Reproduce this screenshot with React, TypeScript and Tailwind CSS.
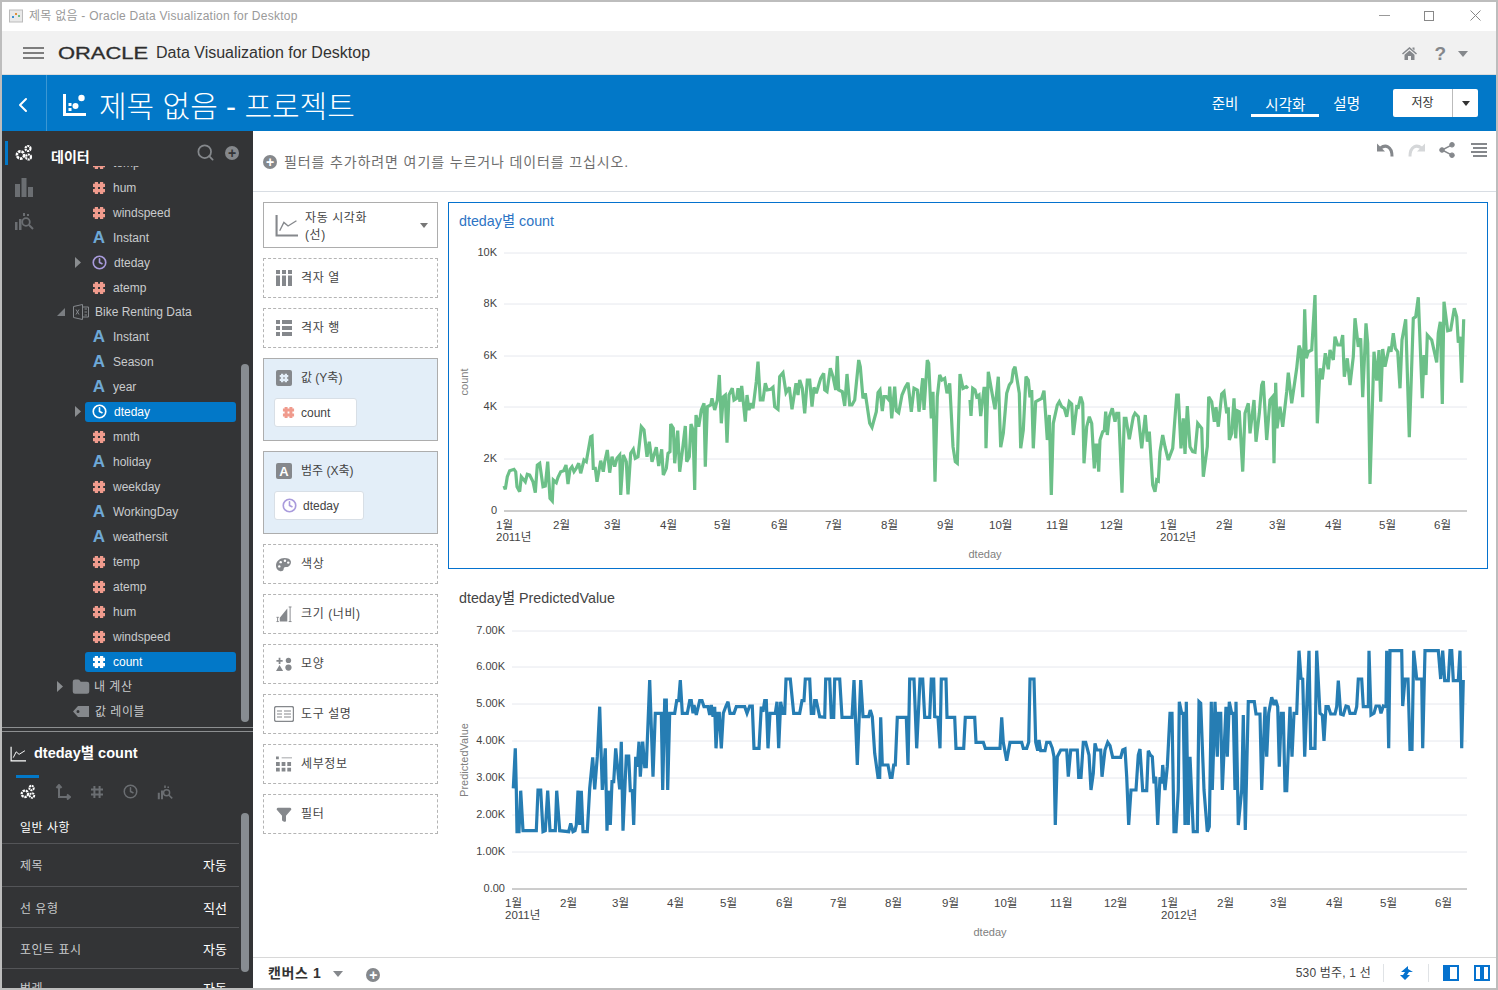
import React from 'react';
import { ChevronLeft, Search, Clock, Folder, Funnel } from 'lucide-react';

// chart traces, read off the picture at 3x: [x, y] pairs per half
const greenA = '168,858 172,868 178,830 185,812 198,808 203,815 207,860 215,875 220,830 232,845 238,823 245,825 255,845 262,878 268,795 275,790 285,860 292,858 299,785 306,895 313,903 316,840 325,848 330,832 338,815 347,812 354,795 360,852 366,808 372,800 378,815 385,805 392,790 398,820 408,780 415,785 428,710 432,708 436,805 442,805 447,845 458,782 466,815 470,785 478,750 485,818 492,770 500,800 507,775 515,765 518,885 526,765 535,785 540,883 548,760 556,748 562,775 570,770 580,680 588,690 597,770 604,725 612,785 625,742 632,798 641,748 646,825 655,805 660,760 666,755 668,672 676,685 680,790 689,692 695,815 704,745 712,678 716,785 724,770 729,672 735,690 740,870 744,645 752,680 760,630 768,610 772,800 778,620 788,615 792,595 800,630 808,600 814,525 820,670 826,590 832,585 837,728 843,585 853,565 858,600 866,595 870,565 876,605 881,558 892,665 897,585 903,630 910,610 915,625 925,545 930,485 937,600 945,600 952,550 958,570 968,568 975,562 980,620 990,628 995,530 1005,518 1014,578 1024,562 1032,628 1044,550 1050,585 1055,540 1063,565 1070,640 1078,540 1085,540 1092,620 1098,562 1105,580 1118,535 1127,520 1130,570 1137,575 1147,505 1155,530 1163,570 1168,468 1172,570 1183,575 1190,618 1197,522 1205,615 1212,615 1220,600 1232,480 1237,500 1245,595 1252,580 1265,670 1272,682 1285,635 1290,578 1296,570 1303,633 1308,590 1315,590 1323,600 1325,560 1331,655 1340,560 1345,632 1352,638 1362,585 1372,562 1380,548 1390,635 1398,565 1408,570 1413,635 1424,535 1428,630 1438,480 1442,490 1450,655 1455,575 1461,845 1468,590 1475,525 1482,540 1490,535 1497,580 1505,550 1515,740 1522,785 1528,790 1536,522 1545,565 1555,560 1560,565';
const greenB = '0,600 3,648 8,565 15,570 20,590 27,585 32,648 42,565 46,565 48,745 55,515 68,590 75,628 85,530 92,742 100,700 110,580 118,555 125,545 130,510 135,500 148,580 152,745 160,690 168,530 175,540 180,592 185,570 190,745 197,605 215,595 222,572 232,720 238,645 244,885 250,670 262,615 268,605 275,620 283,625 290,650 298,605 305,612 310,705 320,620 325,622 332,590 338,610 342,790 350,680 358,650 365,670 373,805 378,735 381,735 386,815 390,720 398,695 403,692 407,635 412,705 418,650 427,625 435,665 440,640 446,640 456,878 463,655 468,655 478,718 490,650 495,640 505,650 515,745 520,700 526,645 532,725 538,695 548,855 555,875 560,840 565,843 570,755 578,705 585,740 595,780 608,745 620,585 625,585 633,745 640,655 645,762 652,618 660,740 668,755 675,757 683,670 695,685 700,830 712,740 716,590 725,605 733,665 738,622 745,680 755,582 762,575 770,640 775,622 778,720 785,700 792,595 797,715 802,632 808,635 818,815 825,640 835,610 840,700 852,600 858,725 868,640 875,555 880,543 890,720 900,600 908,590 912,790 917,548 921,685 930,620 938,680 950,575 955,518 965,610 980,505 987,437 992,450 998,592 1004,328 1009,475 1015,455 1025,450 1035,285 1042,670 1050,505 1057,538 1066,460 1075,508 1080,450 1090,480 1095,410 1103,435 1112,435 1118,405 1123,530 1132,475 1140,555 1150,470 1155,355 1165,440 1172,415 1178,592 1188,370 1193,430 1200,852 1212,455 1220,542 1227,450 1232,605 1238,447 1245,500 1258,440 1263,455 1270,400 1276,445 1283,455 1290,565 1296,420 1307,358 1318,712 1330,355 1337,350 1345,292 1357,595 1362,465 1368,525 1372,405 1385,420 1400,487 1405,400 1411,365 1417,612 1422,305 1433,392 1442,390 1453,325 1460,350 1465,428 1470,410 1475,548 1481,358';
const blueA = '196,625 202,505 205,628 207,755 213,755 218,632 225,752 240,752 265,752 270,630 278,630 285,755 292,752 299,632 306,752 322,752 326,632 335,752 362,755 368,730 375,755 381,752 385,735 390,632 395,735 400,632 405,755 418,755 425,625 434,532 440,628 448,530 455,380 463,630 472,505 477,752 481,632 487,735 492,605 497,605 503,505 515,628 520,485 525,752 535,528 542,528 547,632 553,632 557,735 563,530 568,560 573,485 577,590 584,485 590,560 595,560 605,300 615,590 622,400 640,400 644,630 650,360 655,360 659,630 665,400 680,400 686,362 692,362 697,300 703,400 718,400 725,362 730,362 735,400 738,375 745,405 755,362 762,362 768,380 780,380 785,405 790,375 795,410 800,380 804,505 810,400 814,400 820,505 826,400 834,378 840,365 846,400 858,400 865,380 890,380 897,400 905,378 913,378 918,505 933,505 940,380 945,395 950,362 955,362 960,505 966,400 982,400 987,365 992,505 998,365 1004,400 1010,400 1014,297 1027,297 1037,400 1055,400 1062,362 1068,362 1072,297 1085,297 1090,400 1097,400 1100,362 1105,362 1115,410 1130,412 1133,297 1145,297 1150,412 1157,412 1160,297 1175,297 1182,412 1212,412 1218,300 1228,555 1238,300 1245,410 1262,410 1267,390 1273,410 1280,520 1290,592 1295,592 1298,412 1303,555 1320,555 1327,592 1332,592 1337,555 1342,555 1348,412 1375,412 1380,555 1385,297 1398,297 1406,505 1416,297 1424,297 1430,412 1445,412 1450,297 1457,297 1460,410 1470,412 1476,505 1480,297 1494,297 1497,412 1520,412 1524,505 1547,505 1552,412 1566,412';
const blueB = '0,412 14,412 18,487 40,487 46,505 90,505 95,412 100,487 110,542 120,487 155,487 160,505 170,505 176,487 180,297 192,297 197,487 203,512 207,480 212,512 225,512 230,487 240,487 247,505 252,530 256,735 262,530 272,510 290,510 295,590 302,510 322,510 326,592 333,592 340,487 347,487 357,525 363,630 370,580 375,490 380,510 392,510 396,590 405,510 413,487 420,497 428,532 452,532 458,510 465,507 470,590 476,735 483,630 498,630 505,525 510,507 518,632 530,632 535,512 541,525 547,530 552,610 557,590 563,735 570,592 575,610 578,555 585,630 592,560 600,400 606,400 612,755 618,755 625,630 628,365 635,400 640,400 645,735 649,365 655,735 660,530 670,755 682,755 687,365 692,370 702,630 712,755 718,740 724,365 727,630 735,365 742,530 745,400 752,400 757,630 768,380 772,530 778,365 785,400 790,400 795,630 798,365 805,735 815,630 820,405 826,750 835,365 853,365 858,402 870,402 875,630 885,380 890,530 896,400 905,352 912,375 917,360 923,380 928,560 934,400 940,400 945,632 950,632 960,380 966,530 972,400 980,400 987,212 993,295 998,297 1004,530 1010,380 1017,212 1022,505 1035,505 1040,212 1050,400 1057,405 1062,483 1068,380 1075,380 1082,402 1095,402 1100,380 1105,302 1112,402 1120,405 1128,378 1135,380 1140,400 1155,400 1160,380 1165,297 1175,297 1180,380 1195,380 1197,212 1203,405 1212,400 1218,378 1228,378 1233,400 1240,378 1248,380 1250,212 1256,505 1260,212 1295,212 1298,378 1305,297 1314,297 1320,508 1326,508 1331,212 1340,297 1355,297 1358,505 1365,212 1405,212 1412,297 1418,212 1424,302 1435,302 1440,212 1445,212 1450,302 1465,302 1470,212 1475,505 1480,300';

const toPage = (s: string, ox: number, oy: number) =>
  s
    .split(' ')
    .map((p) => {
      const [x, y] = p.split(',').map(Number);
      return `${(x / 3 + ox).toFixed(1)},${(y / 3 + oy).toFixed(1)}`;
    })
    .join(' ');

const HashIcon = ({ color = '#f09b8d', size = 14, weight = 3.2 }: { color?: string; size?: number; weight?: number }) => (
  <svg width={size} height={size} viewBox="0 0 14 14" fill="none" stroke={color} strokeWidth={weight}>
    <path d="M4.4 1v12M9.6 1v12M1 4.4h12M1 9.6h12" />
  </svg>
);

const AIcon = ({ color = '#6ea8d6' }: { color?: string }) => (
  <span className="w-[14px] text-center text-[17px] leading-none font-bold" style={{ color }}>
    A
  </span>
);

const ClockIcon = ({ color = '#a99bdc', size = 15 }: { color?: string; size?: number }) => (
  <Clock size={size} color={color} strokeWidth={2.6} />
);

const Caret = ({ open }: { open?: boolean }) =>
  open ? (
    <svg width="8" height="8" viewBox="0 0 8 8"><path d="M8 0v8H0z" fill="#7b7e82" /></svg>
  ) : (
    <svg width="6" height="11" viewBox="0 0 6 11"><path d="M0 0l6 5.5L0 11z" fill="#8a8d90" /></svg>
  );

const GearsIcon = ({ color = '#fff', size = 18 }: { color?: string; size?: number }) => (
  <svg width={size} height={size} viewBox="0 0 18 18" fill="none" stroke={color}>
    <circle cx="5.5" cy="11" r="3.6" strokeWidth="2.6" strokeDasharray="2.6 0.9" />
    <circle cx="13" cy="4.5" r="2.5" strokeWidth="2.2" strokeDasharray="2 0.7" />
    <circle cx="13.5" cy="13" r="2.5" strokeWidth="2.2" strokeDasharray="2 0.7" />
  </svg>
);

const BarsSearch = ({ color = '#6b6e72', size = 20 }: { color?: string; size?: number }) => (
  <svg width={size} height={size} viewBox="0 0 20 20" fill="none">
    <path d="M1 11h2.5v8H1zM5 8h2.5v11H5z" fill={color} />
    <circle cx="12" cy="11" r="3.8" stroke={color} strokeWidth="1.8" />
    <path d="M15 14l4 4" stroke={color} strokeWidth="2" />
    <path d="M9 2h2v3H9zM13 3h2v2h-2z" fill={color} />
  </svg>
);

const LineChartIcon = ({ color, size, weight = 1.6 }: { color: string; size: number; weight?: number }) => (
  <svg width={size} height={size} viewBox="0 0 22 22" fill="none" stroke={color} strokeWidth={weight}>
    <path d="M1.5 1v19.5H22" />
    <path d="M4.5 16l4-8 4 3.5 8-5" strokeWidth="1.3" />
  </svg>
);

const ScatterIcon = ({ size = 24 }: { size?: number }) => (
  <svg width={size} height={size} viewBox="0 0 24 24" fill="white">
    <path d="M1 1h3v19h20v3H1z" />
    <rect x="6.5" y="10" width="3" height="3" />
    <rect x="6.5" y="15" width="3" height="3" />
    <circle cx="13.5" cy="13" r="3" />
    <circle cx="19.5" cy="5" r="3.2" />
  </svg>
);

type Row = { label: string; kind?: 'hash' | 'a' | 'clock'; caret?: boolean; selected?: boolean };

const rows: Row[] = [
  { label: 'temp', kind: 'hash' },
  { label: 'hum', kind: 'hash' },
  { label: 'windspeed', kind: 'hash' },
  { label: 'Instant', kind: 'a' },
  { label: 'dteday', kind: 'clock', caret: true },
  { label: 'atemp', kind: 'hash' },
];

const rows2: Row[] = [
  { label: 'Instant', kind: 'a' },
  { label: 'Season', kind: 'a' },
  { label: 'year', kind: 'a' },
  { label: 'dteday', kind: 'clock', caret: true, selected: true },
  { label: 'mnth', kind: 'hash' },
  { label: 'holiday', kind: 'a' },
  { label: 'weekday', kind: 'hash' },
  { label: 'WorkingDay', kind: 'a' },
  { label: 'weathersit', kind: 'a' },
  { label: 'temp', kind: 'hash' },
  { label: 'atemp', kind: 'hash' },
  { label: 'hum', kind: 'hash' },
  { label: 'windspeed', kind: 'hash' },
  { label: 'count', kind: 'hash', selected: true },
];

const TreeRow = ({ row }: { row: Row }) => (
  <div className="flex h-[25px] items-center pr-[17px]">
    <div className="flex w-[38px] justify-end pr-[4px]">{row.caret && <Caret />}</div>
    <div className={`flex h-[20px] flex-1 items-center gap-[7px] rounded-[3px] pl-[7px] ${row.selected ? 'bg-[#0278c8] text-white' : 'text-[#c9cbcd]'}`}>
      {row.kind === 'hash' && <HashIcon color={row.selected ? '#fff' : '#f09b8d'} />}
      {row.kind === 'a' && <AIcon />}
      {row.kind === 'clock' && <ClockIcon color={row.selected ? '#fff' : '#a99bdc'} />}
      <span className="text-[12px]">{row.label}</span>
    </div>
  </div>
);

const props: { label: string; value?: string; cls: string; bright?: boolean }[] = [
  { label: '일반 사항', cls: 'h-[37px] pt-[6px]', bright: true },
  { label: '제목', value: '자동', cls: 'h-[43px] pt-[2px]' },
  { label: '선 유형', value: '직선', cls: 'h-[41px] pt-[3px]' },
  { label: '포인트 표시', value: '자동', cls: 'h-[41px] pt-[3px]' },
  { label: '범례', value: '자동', cls: 'h-[41px]' },
];

const ShelfIcon = ({ name }: { name: string }) => {
  const c = '#85888c';
  if (name === 'cols')
    return (
      <svg width="16" height="16" viewBox="0 0 16 16" fill={c}><path d="M0 0h4v4H0zM6 0h4v4H6zM12 0h4v4h-4zM0 5.5h4V16H0zM6 5.5h4V16H6zM12 5.5h4V16h-4z" /></svg>
    );
  if (name === 'rows')
    return (
      <svg width="16" height="16" viewBox="0 0 16 16" fill={c}><path d="M0 0h4v4H0zM6 0h10v4H6zM0 6h4v4H0zM6 6h10v4H6zM0 12h4v4H0zM6 12h10v4H6z" /></svg>
    );
  if (name === 'y')
    return (
      <span className="flex h-[16px] w-[16px] items-center justify-center rounded-[2px] bg-[#85888c]"><HashIcon color="#e3eef8" size={10} /></span>
    );
  if (name === 'x')
    return (
      <span className="flex h-[16px] w-[16px] items-center justify-center rounded-[2px] bg-[#85888c] text-[13px] leading-none font-bold text-white">A</span>
    );
  if (name === 'color')
    return (
      <svg width="17" height="15" viewBox="0 0 17 15">
        <path d="M9 0.5C4 0.5 0 4 0 8.5S3.5 15 6.5 14.5C9 14 7.5 11.5 9 10.5S12 11 14.5 8.5 17 0.5 9 0.5Z" fill={c} />
        <circle cx="5" cy="5" r="1.3" fill="#fff" />
        <circle cx="9.5" cy="3.5" r="1.3" fill="#fff" />
        <circle cx="3.5" cy="9.5" r="1.3" fill="#fff" />
        <circle cx="13" cy="5.5" r="1.3" fill="#fff" />
      </svg>
    );
  if (name === 'size')
    return (
      <svg width="17" height="17" viewBox="0 0 17 17"><path d="M4 16v-4L12 2v14z" fill={c} /><path d="M0.5 11.5h2.5M1.7 11.5v4.5M0.5 16h2.5M13.5 0.5h3M15 0.5v15.5M13.5 16h3" stroke={c} fill="none" /></svg>
    );
  if (name === 'shape')
    return (
      <svg width="18" height="16" viewBox="0 0 18 16" fill={c}><path d="M3 1h2v2.5h2.5v2H5V8H3V5.5H.5v-2H3zM4 9l4 7H0z" /><circle cx="14" cy="4" r="3" /><circle cx="14" cy="12" r="3.5" /></svg>
    );
  if (name === 'tip')
    return (
      <svg width="20" height="16" viewBox="0 0 20 16" fill="none" stroke={c} className="-mx-[2px] shrink-0"><rect x="0.5" y="0.5" width="19" height="15" rx="2" strokeWidth="1.4" /><path d="M3 5h5M3 8h5M3 11h5M10 5h7M10 8h7M10 11h7" strokeWidth="1.2" /></svg>
    );
  if (name === 'detail')
    return (
      <svg width="17" height="16" viewBox="0 0 17 16" fill={c}><path d="M0 0h3v3H0zM0 6h4v4H0zM6 6h4v4H6zM12 6h4v4h-4zM0 12h4v4H0zM6 12h4v4H6zM12 12h4v4h-4zM6 1h11v1H6z" /></svg>
    );
  return <Funnel size={17} color={c} fill={c} />;
};

const Shelf = ({ icon, label }: { icon: string; label: string }) => (
  <div className="flex h-[40px] items-center gap-[9px] border border-dashed border-[#b4b4b4] pl-[12px] text-[12px] tracking-[0.6px] text-[#444]">
    <div className="flex w-[16px] justify-center"><ShelfIcon name={icon} /></div>
    <span>{label}</span>
  </div>
);

const FilledShelf = ({ icon, label, pill, pillIcon, w }: { icon: string; label: string; pill: string; pillIcon: React.ReactNode; w: string }) => (
  <div className="h-[83px] border border-[#adadad] bg-[#e3eef8] pt-[10px] pl-[12px] text-[#444]">
    <div className="flex items-center gap-[9px] text-[12px]">
      <ShelfIcon name={icon} />
      <span>{label}</span>
    </div>
    <div className={`mt-[11px] -ml-[2px] flex h-[29px] items-center gap-[6px] rounded-[3px] border border-[#d8dfe6] bg-white pl-[7px] text-[12px] ${w}`}>
      {pillIcon}
      <span>{pill}</span>
    </div>
  </div>
);

type ChartProps = {
  vb: [number, number, number, number];
  plotLeft: number;
  ys: [string, number][];
  axisY: number;
  labelY: number;
  months: [string, number][];
  yearAt: [string, number][];
  yTitle: string;
  yTitleX: number;
  yTitleY: number;
  xTitleX: number;
  xTitleY: number;
  stroke: string;
  lines: string[];
};

const Chart = ({ vb, plotLeft, ys, axisY, labelY, months, yearAt, yTitle, yTitleX, yTitleY, xTitleX, xTitleY, stroke, lines }: ChartProps) => (
  <svg width={vb[2]} height={vb[3]} viewBox={vb.join(' ')} className="block">
    {ys.map(([t, y]) => (
      <g key={t}>
        {t !== ys[ys.length - 1][0] && <line x1={plotLeft} x2="1467" y1={y} y2={y} stroke="#e6e8ee" />}
        <text x={plotLeft - 7} y={y + 3} textAnchor="end" fontSize="11" fill="#444">{t}</text>
      </g>
    ))}
    <line x1={plotLeft} x2="1467" y1={axisY} y2={axisY} stroke="#9a9a9a" />
    {lines.map((l, i) => (
      <polyline key={i} points={l} fill="none" stroke={stroke} strokeWidth="3.2" strokeLinejoin="miter" strokeMiterlimit="3" />
    ))}
    {months.map(([m, x], i) => (
      <text key={i} x={x} y={labelY} fontSize="11.5" fill="#444">{m}</text>
    ))}
    {yearAt.map(([m, x]) => (
      <text key={m} x={x} y={labelY + 12} fontSize="11.5" fill="#444">{m}</text>
    ))}
    <text transform={`translate(${yTitleX} ${yTitleY}) rotate(-90)`} textAnchor="middle" fontSize="11" fill="#808080">{yTitle}</text>
    <text x={xTitleX} y={xTitleY} textAnchor="middle" fontSize="11" fill="#808080">dteday</text>
  </svg>
);

const monthsA: [string, number][] = [['1월', 496], ['2월', 553], ['3월', 604], ['4월', 660], ['5월', 714], ['6월', 771], ['7월', 825], ['8월', 881], ['9월', 937], ['10월', 989], ['11월', 1046], ['12월', 1100], ['1월', 1160], ['2월', 1216], ['3월', 1269], ['4월', 1325], ['5월', 1379], ['6월', 1434]];
const monthsB: [string, number][] = [['1월', 505], ['2월', 560], ['3월', 612], ['4월', 667], ['5월', 720], ['6월', 776], ['7월', 830], ['8월', 885], ['9월', 942], ['10월', 994], ['11월', 1050], ['12월', 1104], ['1월', 1161], ['2월', 1217], ['3월', 1270], ['4월', 1326], ['5월', 1380], ['6월', 1435]];

export default function App() {
  return (
    <div className="flex h-[990px] w-[1498px] flex-col overflow-hidden border-2 border-[#bdbdbd] bg-white font-['Liberation_Sans','Noto_Sans_CJK_KR',sans-serif] text-[#333]">
      {/* window title bar */}
      <div className="flex h-[29px] shrink-0 items-center pb-[2px] pl-[7px] text-[12px] tracking-[0.25px] text-[#9a9a9a]">
        <svg width="15" height="15" viewBox="0 0 15 15" className="mr-[5px]">
          <rect x="0.5" y="2" width="13" height="12" fill="#e9e9e9" stroke="#bbb" />
          <rect x="3" y="8" width="2" height="2" fill="#3d8fd1" />
          <rect x="6" y="5" width="2" height="2" fill="#e0913c" />
          <rect x="9" y="7" width="2" height="2" fill="#6cc088" />
        </svg>
        <span>제목 없음 - Oracle Data Visualization for Desktop</span>
        <div className="ml-auto flex items-center pr-[15px]">
          <span className="h-px w-[11px] bg-[#999]" />
          <span className="ml-[34px] h-[10px] w-[10px] border border-[#888]" />
          <svg width="11" height="11" viewBox="0 0 11 11" stroke="#888" className="ml-[36px]"><path d="M0.5 0.5l10 10M10.5 0.5l-10 10" /></svg>
        </div>
      </div>

      {/* oracle header */}
      <div className="flex h-[44px] shrink-0 items-center border-b border-[#dcdcdc] bg-[#f1f1f1] pl-[21px]">
        <div className="flex w-[21px] flex-col gap-[3px]">
          <span className="h-[2px] bg-[#7d7d7d]" />
          <span className="h-[2px] bg-[#7d7d7d]" />
          <span className="h-[2px] bg-[#7d7d7d]" />
        </div>
        <svg width="95" height="16" viewBox="0 0 95 16" className="ml-[14px]">
          <text x="0" y="13.5" fontSize="16" stroke="#2e2e2e" strokeWidth="0.3" fill="#2e2e2e" textLength="90" lengthAdjust="spacingAndGlyphs">ORACLE</text>
        </svg>
        <span className="ml-[3px] text-[16px] text-[#333]">Data Visualization for Desktop</span>
        <div className="ml-auto flex items-center pt-[2px] pr-[28px]">
          <svg width="15" height="13" viewBox="0 0 15 13" fill="#85888c" className="ml-[2px]">
            <path d="M7.5 0L15 6.5l-1 1-6.500-5.500L1 7.5l-1-1zM10.5 0.5h2V3.5l-2-1.700zM2.5 7.800L7.5 3.5l5 4.300V13H9V9H6v4H2.5z" />
          </svg>
          <span className="ml-[17px] text-[19px] leading-none font-bold text-[#85888c]">?</span>
          <span className="ml-[12px] h-0 w-0 border-x-[5px] border-t-[6px] border-x-transparent border-t-[#85888c]" />
        </div>
      </div>

      {/* project bar */}
      <div className="flex h-[56px] shrink-0 items-center bg-[#0278c8] text-white">
        <div className="flex h-full w-[45px] items-center justify-center border-r border-[#3c97d3] pt-[4px] pr-[2px]">
          <ChevronLeft size={24} strokeWidth={2} />
        </div>
        <div className="ml-[15px] pt-[4px]"><ScatterIcon size={24} /></div>
        <span className="ml-[13px] pt-[8px] text-[30px] leading-none font-light">제목 없음 - 프로젝트</span>
        <div className="ml-auto flex h-full items-center pr-[18px]">
          <span className="mr-[13px] pt-[3px] text-[14.5px]">준비</span>
          <span className="flex h-[42px] w-[68px] items-end justify-center self-start border-b-[3px] border-white text-[14.5px] leading-[18px]">시각화</span>
          <span className="mr-[2px] ml-[14px] pt-[3px] text-[14.5px]">설명</span>
          <div className="ml-[31px] flex h-[28px] w-[85px] rounded-[2px] bg-white text-[#333]">
            <span className="flex flex-1 items-center justify-center border-r border-[#bbb] text-[12px]">저장</span>
            <span className="flex w-[25px] items-center justify-center">
              <span className="h-0 w-0 border-x-[4px] border-t-[5px] border-x-transparent border-t-[#333]" />
            </span>
          </div>
        </div>
      </div>

      <div className="flex min-h-0 flex-1">
        {/* left sidebar */}
        <div className="flex w-[251px] shrink-0 flex-col bg-[#333436]">
          <div className="relative flex h-[596px] shrink-0">
            <div className="flex w-[45px] shrink-0 flex-col items-center pt-[13px] pr-[2px]">
              <span className="absolute top-[10px] left-[3px] h-[24px] w-[3px] bg-[#0278c8]" />
              <GearsIcon />
              <svg width="18" height="19" viewBox="0 0 18 19" fill="#6b6e72" className="mt-[16px]"><path d="M0 6h5v13H0zM6.5 0h5v19h-5zM13 9h5v10h-5z" /></svg>
              <div className="mt-[14px]"><BarsSearch /></div>
            </div>
            <div className="min-w-0 flex-1">
              <div className="flex h-[35px] items-center pr-[14px] pl-[4px]">
                <span className="pt-[17px] text-[14px] font-bold text-white">데이터</span>
                <Search size={19} color="#85888c" strokeWidth={2.2} className="ml-auto translate-y-[4px]" />
                <span className="ml-[10px] flex h-[14px] w-[14px] translate-y-[4px] items-center justify-center rounded-full bg-[#85888c] text-[14px] leading-none font-bold text-[#333436]">+</span>
              </div>
              <div className="h-[561px] overflow-hidden">
                <div className="-mt-[16px]">
                  {rows.map((r) => <TreeRow key={r.label} row={r} />)}
                  <div className="flex h-[24px] items-center text-[12px] text-[#c9cbcd]">
                    <div className="flex w-[18px] justify-end"><Caret open /></div>
                    <svg width="16" height="16" viewBox="0 0 16 16" fill="none" stroke="#85888c" className="mr-[5px] ml-[8px]">
                      <path d="M0.5 2.5L9.5 0.5V15.5L0.5 13.5ZM9.5 3H15.5V13H9.5M11.5 5h2.5M11.5 8h2.5M11.5 11h2.5" />
                      <path d="M3 5.5l3 5M6 5.5l-3 5" />
                    </svg>
                    <span className="ml-[1px]">Bike Renting Data</span>
                  </div>
                  {rows2.map((r, i) => <TreeRow key={r.label + i} row={r} />)}
                  <div className="flex h-[25px] items-center text-[12px] tracking-[0.5px] text-[#c9cbcd]">
                    <div className="flex w-[16px] justify-end"><Caret /></div>
                    <Folder size={18} color="#85888c" fill="#85888c" className="ml-[9px]" />
                    <span className="ml-[4px]">내 계산</span>
                  </div>
                  <div className="flex h-[25px] items-center text-[12px] tracking-[0.5px] text-[#c9cbcd]">
                    <svg width="16" height="11" viewBox="0 0 16 11" className="ml-[26px]">
                      <path fillRule="evenodd" d="M5 0h11v11H5L0 5.5zM5 4a1.5 1.5 0 1 0 0 3 1.5 1.5 0 0 0 0-3z" fill="#85888c" />
                    </svg>
                    <span className="ml-[6px]">값 레이블</span>
                  </div>
                </div>
              </div>
            </div>
            <span className="absolute top-[233px] right-[4px] h-[358px] w-[8px] rounded-[4px] bg-[#878c91]" />
          </div>

          <div className="h-[5px] shrink-0 border-y border-[#8d8f91]" />

          {/* properties panel */}
          <div className="relative min-h-0 flex-1 overflow-hidden">
            <div className="flex h-[43px] items-center pl-[8px]">
              <LineChartIcon color="#fff" size={16} />
              <span className="ml-[8px] text-[14.5px] font-bold text-white">dteday별 count</span>
            </div>
            <div className="ml-[14px] h-[3px] w-[23px] bg-[#0278c8]" />
            <div className="flex h-[27px] items-center gap-[19px] pl-[18px]">
              <GearsIcon size={16} />
              <svg width="16" height="16" viewBox="0 0 16 16" fill="none" stroke="#6b6e72" strokeWidth="2"><path d="M4 2v11h11M1.5 4L4 1l2.5 3M12 10.5l3 2.5-3 2.5" /></svg>
              <HashIcon color="#6b6e72" size={14} weight={2} />
              <Clock size={15} color="#6b6e72" strokeWidth={2.4} />
              <BarsSearch size={16} />
            </div>
            <div className="pt-[2px] pr-[14px]">
              {props.map((p) => (
                <div key={p.label} className={`flex items-center justify-between border-b border-[#545558] pr-[12px] pl-[18px] text-[12px] tracking-[0.5px] ${p.cls} ${p.bright ? 'text-white' : 'text-[#c9cbcd]'}`}>
                  <span>{p.label}</span>
                  {p.value && <span className="text-[13px] tracking-normal text-white">{p.value}</span>}
                </div>
              ))}
            </div>
            <span className="absolute top-[81px] right-[4px] h-[159px] w-[8px] rounded-[4px] bg-[#878c91]" />
          </div>
        </div>

        {/* main area */}
        <div className="flex min-w-0 flex-1 flex-col">
          <div className="flex h-[61px] shrink-0 border-b border-[#d8dde3] pl-[10px]">
            <div className="flex items-center pt-[2px]">
              <span className="flex h-[14px] w-[14px] items-center justify-center rounded-full bg-[#85888c] text-[14px] leading-none font-bold text-white">+</span>
              <span className="ml-[7px] text-[14px] tracking-[0.88px] text-[#6e6e6e]">필터를 추가하려면 여기를 누르거나 데이터를 끄십시오.</span>
            </div>
            <div className="ml-auto flex h-fit items-center gap-[14px] pt-[11px] pr-[9px]">
              <svg width="17" height="14" viewBox="0 0 17 14" fill="none" className="-translate-x-[2px]">
                <path d="M0 0.5v8h8z" fill="#85888c" />
                <path d="M3.5 5C8 1.5 15 2.5 15 13.5" stroke="#85888c" strokeWidth="3" />
              </svg>
              <svg width="17" height="14" viewBox="0 0 17 14" fill="none" className="-translate-x-[2px]">
                <path d="M17 0.5v8H9z" fill="#d5d7d9" />
                <path d="M13.5 5C9 1.5 2 2.5 2 13.5" stroke="#d5d7d9" strokeWidth="3" />
              </svg>
              <svg width="16" height="16" viewBox="0 0 16 16" fill="#85888c" stroke="#85888c" className="-translate-x-[2px]">
                <circle cx="13" cy="2.8" r="2.3" />
                <circle cx="3" cy="8" r="2.3" />
                <circle cx="13" cy="13.2" r="2.3" />
                <path d="M13 2.8L3 8l10 5.2" fill="none" strokeWidth="1.5" />
              </svg>
              <div className="flex w-[16px] flex-col gap-[2px]">
                <span className="h-[2px] bg-[#85888c]" />
                <span className="ml-[2px] h-[2px] bg-[#85888c]" />
                <span className="h-[2px] bg-[#85888c]" />
                <span className="ml-[2px] h-[2px] bg-[#85888c]" />
              </div>
            </div>
          </div>

          <div className="flex min-h-0 flex-1">
            {/* grammar panel */}
            <div className="ml-[10px] flex w-[175px] shrink-0 flex-col gap-[10px] pt-[10px]">
              <div className="flex h-[46px] items-center border border-[#adadad] pr-[9px] pl-[11px] text-[12px] leading-[17px] tracking-[0.6px] text-[#444]">
                <LineChartIcon color="#85888c" size={23} weight={2} />
                <span className="ml-[7px] flex-1 pt-[3px]">자동 시각화<br />(선)</span>
                <span className="h-0 w-0 border-x-[4px] border-t-[5px] border-x-transparent border-t-[#777]" />
              </div>
              <Shelf icon="cols" label="격자 열" />
              <Shelf icon="rows" label="격자 행" />
              <FilledShelf icon="y" label="값 (Y축)" pill="count" w="w-[83px]" pillIcon={<HashIcon size={13} />} />
              <FilledShelf icon="x" label="범주 (X축)" pill="dteday" w="w-[90px]" pillIcon={<ClockIcon size={15} />} />
              <Shelf icon="color" label="색상" />
              <Shelf icon="size" label="크기 (너비)" />
              <Shelf icon="shape" label="모양" />
              <Shelf icon="tip" label="도구 설명" />
              <Shelf icon="detail" label="세부정보" />
              <Shelf icon="filter" label="필터" />
            </div>

            {/* canvas */}
            <div className="ml-[10px] flex-1 pt-[10px]">
              <div className="h-[367px] w-[1040px] border border-[#0572ce]">
                <div className="flex h-[37px] items-end pb-[8px] pl-[10px] text-[14.3px] text-[#2d74c4]">dteday별 count</div>
                <Chart
                  vb={[449, 240, 1038, 328]}
                  plotLeft={504}
                  ys={[['10K', 253], ['8K', 304], ['6K', 356], ['4K', 407], ['2K', 459], ['0', 511]]}
                  axisY={511}
                  labelY={529}
                  months={monthsA}
                  yearAt={[['2011년', 496], ['2012년', 1160]]}
                  yTitle="count"
                  yTitleX={468}
                  yTitleY={382}
                  xTitleX={985}
                  xTitleY={558}
                  stroke="#6cc088"
                  lines={[toPage(greenA, 448, 200), toPage(greenB, 970, 200)]}
                />
              </div>
              <div className="flex h-[43px] items-end pb-[3px] pl-[11px] text-[14.3px] text-[#444]">dteday별 PredictedValue</div>
              <Chart
                vb={[448, 612, 1040, 336]}
                plotLeft={512}
                ys={[['7.00K', 631], ['6.00K', 667], ['5.00K', 704], ['4.00K', 741], ['3.00K', 778], ['2.00K', 815], ['1.00K', 852], ['0.00', 889]]}
                axisY={889}
                labelY={907}
                months={monthsB}
                yearAt={[['2011년', 505], ['2012년', 1161]]}
                yTitle="PredictedValue"
                yTitleX={468}
                yTitleY={760}
                xTitleX={990}
                xTitleY={936}
                stroke="#267db3"
                lines={[toPage(blueA, 448, 580), toPage(blueB, 970, 580)]}
              />
            </div>
          </div>

          {/* footer */}
          <div className="flex h-[31px] shrink-0 items-center border-t border-[#d8d8d8] pl-[15px]">
            <span className="text-[14px] font-bold tracking-[0.6px] text-[#333]">캔버스 1</span>
            <span className="ml-[12px] h-0 w-0 translate-y-[1px] border-x-[5px] border-t-[6px] border-x-transparent border-t-[#85888c]" />
            <span className="ml-[23px] flex h-[14px] w-[14px] translate-y-[2px] items-center justify-center rounded-full bg-[#85888c] text-[14px] leading-none font-bold text-white">+</span>
            <div className="ml-auto flex h-full items-center pr-[6px]">
              <span className="border-r border-[#e0e3e6] pr-[12px] text-[12px] leading-[18px] tracking-[0.2px] text-[#444]">530 범주, 1 선</span>
              <span className="flex h-[18px] w-[45px] items-center justify-center border-r border-[#e0e3e6]">
                <svg width="13" height="14" viewBox="0 0 13 14" fill="#0572ce"><path d="M8 0L1 6h4L3 9H0l5 5 5-5H7l2-3h4L8 3z" /></svg>
              </span>
              <span className="ml-[14px] flex h-[16px] w-[16px] border-2 border-[#0572ce]"><span className="w-[5px] bg-[#0572ce]" /></span>
              <span className="ml-[15px] flex h-[16px] w-[16px] justify-center border-2 border-[#0572ce]"><span className="w-[4px] bg-[#0572ce]" /></span>
            </div>
          </div>
        </div>
      </div>
    </div>
  );
}
